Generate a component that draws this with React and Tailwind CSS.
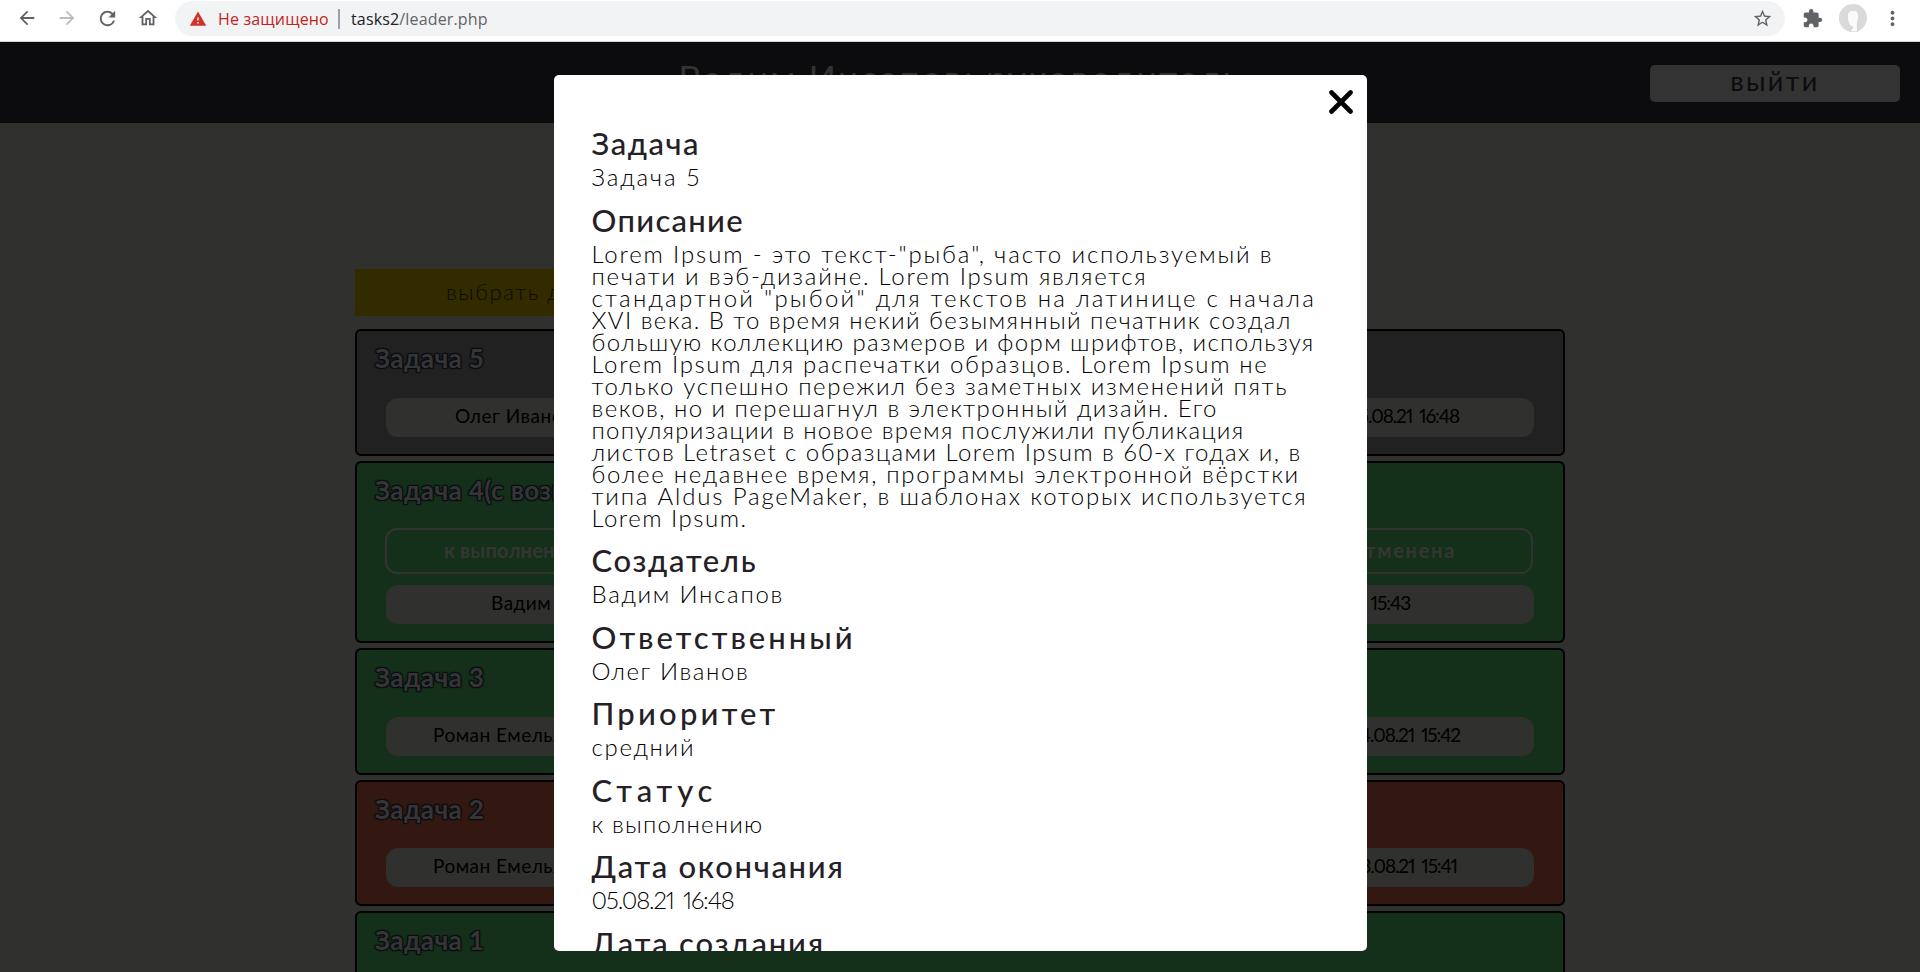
import {
  MdArrowBack,
  MdArrowForward,
  MdRefresh,
  MdOutlineHome,
  MdWarning,
  MdStarBorder,
  MdExtension,
  MdMoreVert,
} from 'react-icons/md';

const description = [
  ['Lorem Ipsum - это текст-"рыба", часто используемый в', 'tracking-[1.85px]'],
  ['печати и вэб-дизайне. Lorem Ipsum является', 'tracking-[1.77px]'],
  ['стандартной "рыбой" для текстов на латинице с начала', 'tracking-[2.25px]'],
  ['XVI века. В то время некий безымянный печатник создал', 'tracking-[1.42px]'],
  ['большую коллекцию размеров и форм шрифтов, используя', 'tracking-[1.38px]'],
  ['Lorem Ipsum для распечатки образцов. Lorem Ipsum не', 'tracking-[1.65px]'],
  ['только успешно пережил без заметных изменений пять', 'tracking-[1.65px]'],
  ['веков, но и перешагнул в электронный дизайн. Его', 'tracking-[1.45px]'],
  ['популяризации в новое время послужили публикация', 'tracking-[1.27px]'],
  ['листов Letraset с образцами Lorem Ipsum в 60-х годах и, в', 'tracking-[1.45px]'],
  ['более недавнее время, программы электронной вёрстки', 'tracking-[1.69px]'],
  ['типа Aldus PageMaker, в шаблонах которых используется', 'tracking-[1.83px]'],
  ['Lorem Ipsum.', 'tracking-[1.5px]'],
];

const fields = [
  { title: 'Задача', titleTracking: 'tracking-[1.5px]', lines: [['Задача 5', 'tracking-[1.9px]']] },
  { title: 'Описание', titleTracking: 'tracking-[1.3px]', lines: description },
  { title: 'Создатель', titleTracking: 'tracking-[1.7px]', lines: [['Вадим Инсапов', 'tracking-[1.7px]']] },
  { title: 'Ответственный', titleTracking: 'tracking-[3px]', lines: [['Олег Иванов', 'tracking-[1.6px]']] },
  { title: 'Приоритет', titleTracking: 'tracking-[3.2px]', lines: [['средний', 'tracking-[1.7px]']] },
  { title: 'Статус', titleTracking: 'tracking-[4.8px]', lines: [['к выполнению', 'tracking-[1.2px]']] },
  { title: 'Дата окончания', titleTracking: 'tracking-[1.7px]', lines: [['05.08.21 16:48', 'proportional-nums tracking-[-1.15px] [word-spacing:4px]']] },
  { title: 'Дата создания', titleTracking: 'tracking-[1.83px]', lines: [['04.08.21 16:48', 'proportional-nums tracking-[-1.15px] [word-spacing:4px]']] },
];

const tasks = [
  { title: 'Задача 5', color: 'bg-[#212121]', height: 'h-[127px]', name: 'Олег Иванов', date: '05.08.21 16:48', pad: 'pl-[69px] pr-[75px]' },
  {
    title: 'Задача 4(с возвратом)',
    color: 'bg-[#14301a]',
    height: 'h-[182px]',
    status: ['к выполнению', 'отменена'],
    name: 'Вадим Инсапов',
    date: '04.08.21 15:43',
    pad: 'pl-[105px] pr-[124px]',
  },
  { title: 'Задача 3', color: 'bg-[#14301a]', height: 'h-[127px]', name: 'Роман Емельянов', date: '04.08.21 15:42', pad: 'pl-[47px] pr-[74px]' },
  { title: 'Задача 2', color: 'bg-[#321811]', height: 'h-[126px]', name: 'Роман Емельянов', date: '03.08.21 15:41', pad: 'pl-[47px] pr-[77px]' },
  { title: 'Задача 1', color: 'bg-[#14301a]', height: 'h-[127px]', name: 'Роман Емельянов', date: '03.08.21 15:40', pad: 'pl-[47px] pr-[75px]' },
];

function BrowserBar() {
  return (
    <div className="flex h-[42px] shrink-0 items-start border-b border-[#d5d5d5] bg-white pl-4 font-['Open_Sans',sans-serif] text-[#5f6368]">
      <div className="flex h-9 items-center gap-[18px]">
        <MdArrowBack className="size-[22px]" />
        <MdArrowForward className="size-[22px] text-[#babcbe]" />
        <MdRefresh className="size-[23px]" />
        <MdOutlineHome className="size-[22px]" />
      </div>
      <div className="mt-px ml-[16px] flex h-[35px] w-[1610px] items-center rounded-full bg-[#f1f3f4] pr-[12px] pl-[14px] text-[16px]">
        <MdWarning className="size-[18px] text-[#d13427]" />
        <span className="ml-[11px] w-[111px] tracking-[0.15px] whitespace-nowrap text-[#c5221f]">Не защищено</span>
        <span className="ml-[9px] h-5 w-[2px] bg-[#9aa0a6]" />
        <span className="ml-[11px] grow tracking-[0.15px]">
          <span className="text-[#202124]">tasks2</span>/leader.php
        </span>
        <MdStarBorder className="size-[21px]" />
      </div>
      <div className="flex h-9 items-center pl-[17px]">
        <MdExtension className="size-[21px]" />
        <svg viewBox="0 0 28 28" className="ml-[16px] size-7">
          <circle cx="14" cy="14" r="14" fill="#dadada" />
          <path d="M8.500 14c-.6-5 1.300-7.800 5.700-7.800s6.200 3 5.300 8.300c-.4 3-1.300 5-1.200 8 0 2 .4 4 .8 5-3 .8-6.500.6-9-.6 2-.5 3.300-2 3.500-4-3-.7-4.700-4-5.100-8.900z" fill="#f9fafb" stroke="#c9ced2" strokeWidth=".7" />
        </svg>
        <MdMoreVert className="ml-[14px] size-[23px]" />
      </div>
    </div>
  );
}

function Card({ task }) {
  return (
    <div className={`flex shrink-0 flex-col rounded-md border-2 border-black ${task.color} ${task.height} pt-[10px] pr-[29px] pb-[17px] pl-[29px]`}>
      <h2 className="-ml-[11px] text-[26px] leading-[34px] font-bold tracking-[0.4px] text-[#353535] [text-shadow:1px_1px_1px_#0a0c12,-1px_-1px_1px_#0a0c12,1px_-1px_1px_#0a0c12,-1px_1px_1px_#0a0c12]">
        {task.title}
      </h2>
      <div className="mt-auto flex flex-col gap-[11px]">
        {task.status && (
          <div className="-ml-px mr-px flex h-[46px] items-center justify-between rounded-xl border-2 border-[#333333] pr-[75px] pb-[2px] pl-[57px] text-[20px] font-bold text-[#353535]">
            <span className="tracking-[0.2px]">{task.status[0]}</span>
            <span className="tracking-[1.7px]">{task.status[1]}</span>
          </div>
        )}
        <div className={`flex h-[39px] items-center justify-between rounded-xl bg-[#30302e] pb-[3px] text-[19px] text-black ${task.pad}`}>
          <span className="tracking-[0.5px]">{task.name}</span>
          <span className="proportional-nums tracking-[-1.1px] [word-spacing:3px]">{task.date}</span>
        </div>
      </div>
    </div>
  );
}

function Modal() {
  return (
    <div className="absolute top-[75px] left-[554px] h-[876px] w-[813px] overflow-hidden rounded-[5px] bg-white">
      <svg viewBox="0 0 24 24" className="absolute top-[15px] right-[14px] size-6" stroke="#000" strokeWidth="4.600" strokeLinecap="round">
        <path d="M2.500 2.500 21.500 21.500M21.500 2.500 2.500 21.500" />
      </svg>
      <div className="flex flex-col gap-[14px] pt-[51px] pl-[37.5px]">
        {fields.map((field) => (
          <div key={field.title}>
            <h3 className={`text-[31px] leading-[34px] font-medium whitespace-nowrap text-[#261f28] ${field.titleTracking}`}>{field.title}</h3>
            <div className="mt-[6px] mb-[0.5px] text-[24px] leading-[22px] font-light whitespace-nowrap text-black">
              {field.lines.map(([text, tracking]) => (
                <p key={text} className={tracking}>{text}</p>
              ))}
            </div>
          </div>
        ))}
      </div>
    </div>
  );
}

export default function App() {
  return (
    <div className="relative flex h-[972px] w-[1920px] flex-col overflow-hidden bg-[#30302e] font-[Lato,sans-serif]">
      <BrowserBar />
      <header className="grid h-[81px] shrink-0 grid-cols-[1fr_auto_1fr] items-start bg-[#0c0c0e]">
        <span />
        <h1 className="pt-[15px] text-[36px] leading-[43px] tracking-[2px] text-[#333333]">Вадим Инсапов: руководитель</h1>
        <button className="mt-[23px] mr-5 h-[37px] w-[250px] justify-self-end rounded-[5px] bg-[#333333] pb-[6px] text-[27px] leading-[31px] tracking-[2.4px] text-[#0c0c0e]">
          выйти
        </button>
      </header>
      <main className="flex flex-col gap-[5px] pt-[146px] pr-[355px] pl-[355px]">
        <button className="mb-[8px] h-[47px] w-[400px] shrink-0 bg-[#332b00] pb-[3px] pl-[91px] text-left text-[22px] font-light tracking-[1.6px] text-[#0c0a00]">
          выбрать дату
        </button>
        {tasks.map((task) => (
          <Card key={task.title} task={task} />
        ))}
      </main>
      <Modal />
    </div>
  );
}
